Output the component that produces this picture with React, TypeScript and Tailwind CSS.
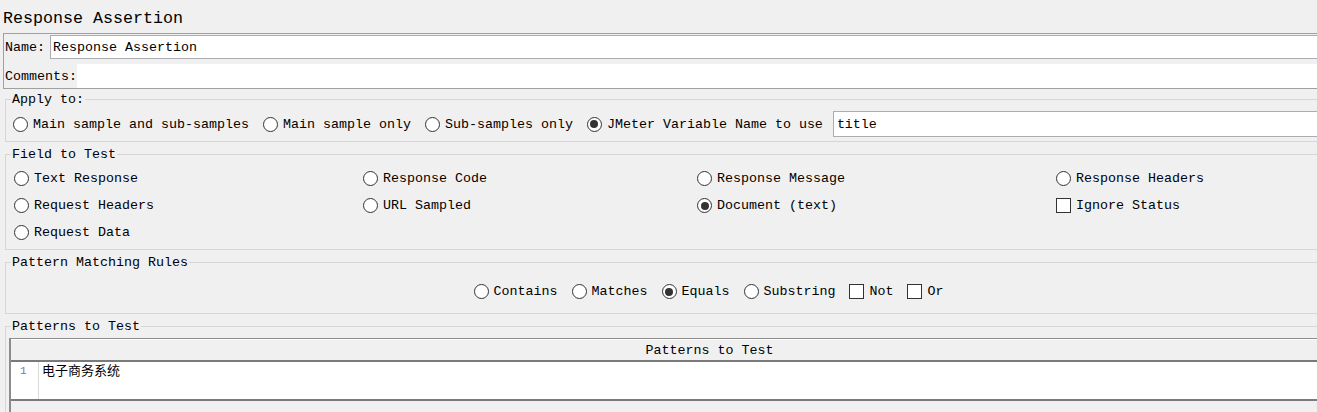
import React from "react";

const mono = "font-['Liberation_Mono','Noto_Sans_CJK_SC',monospace]";

function Radio({ label, checked = false }: { label: string; checked?: boolean }) {
  return (
    <label className="flex items-center gap-[5px] whitespace-nowrap">
      <span className="w-[15px] h-[15px] rounded-full border border-[#333333] bg-white flex items-center justify-center shrink-0">
        {checked && <span className="w-[8px] h-[8px] rounded-full bg-[#333333]" />}
      </span>
      <span className="pt-[1px]">{label}</span>
    </label>
  );
}

function Check({ label }: { label: string }) {
  return (
    <label className="flex items-center gap-[5px] whitespace-nowrap">
      <span className="w-[15px] h-[15px] border border-[#333333] bg-white shrink-0" />
      <span className="pt-[1px]">{label}</span>
    </label>
  );
}

function Group({ title, className = "", children }: { title: string; className?: string; children: React.ReactNode }) {
  return (
    <fieldset className={`border border-[#d6d6d6] mx-[5px] ${className}`}>
      <legend className="ml-[5px] px-[1px] h-[16px] leading-[18px]">{title}</legend>
      {children}
    </fieldset>
  );
}

export default function App() {
  return (
    <div className={`w-full h-[412px] overflow-hidden bg-[#f0f0f0] text-black text-[13.33px] leading-[16px] ${mono}`}>
      <div className="w-[1417px]">
        <div className="h-[33px] pl-[3px] pt-[5px] flex items-center text-[16.67px]">Response Assertion</div>

        <div className="ml-[3px] border border-[#a0a0a0] h-[56px]">
          <div className="flex items-center mt-[1px] h-[24px] pl-[1px]">
            <span className="w-[45px] shrink-0 pt-[2px]">Name:</span>
            <div className="flex-1 h-[24px] bg-white border border-[#abadb3] flex items-center pl-[2px] pt-[2px]">
              Response Assertion
            </div>
          </div>
          <div className="flex items-center mt-[5px] h-[24px] pl-[1px]">
            <span className="w-[72px] shrink-0 pt-[2px]">Comments:</span>
            <div className="flex-1 h-[24px] bg-white" />
          </div>
        </div>

        <Group title="Apply to:" className="mt-[2px]">
          <div className="h-[34px] flex items-center pl-[7px] gap-[14px]">
            <Radio label="Main sample and sub-samples" />
            <Radio label="Main sample only" />
            <Radio label="Sub-samples only" />
            <Radio label="JMeter Variable Name to use" checked />
            <div className="flex-1 h-[26px] bg-white border border-[#abadb3] flex items-center pl-[3px] pt-[1px] -ml-[4px]">
              title
            </div>
          </div>
        </Group>

        <Group title="Field to Test" className="mt-[4px]">
          <div className="grid grid-cols-[349px_334px_359px_1fr] auto-rows-[27px] items-center pl-[8px] pt-[3px] pb-[3px]">
            <Radio label="Text Response" />
            <Radio label="Response Code" />
            <Radio label="Response Message" />
            <Radio label="Response Headers" />
            <Radio label="Request Headers" />
            <Radio label="URL Sampled" />
            <Radio label="Document (text)" checked />
            <Check label="Ignore Status" />
            <Radio label="Request Data" />
          </div>
        </Group>

        <Group title="Pattern Matching Rules" className="mt-[4px]">
          <div className="h-[43px] flex items-center justify-center gap-[14px]">
            <Radio label="Contains" />
            <Radio label="Matches" />
            <Radio label="Equals" checked />
            <Radio label="Substring" />
            <Check label="Not" />
            <Check label="Or" />
          </div>
        </Group>

        <Group title="Patterns to Test" className="mt-[4px]">
          <div className="mx-[3px] mt-[4px] border-l-2 border-t border-[#8c8c8c]">
            <div className="h-[21px] flex items-center justify-center border-t border-white bg-[#f0f0f0] pt-[1px]">
              Patterns to Test
            </div>
            <div className="h-[2px] bg-[#7a7a7a]" />
            <div className="h-[37px] bg-white flex">
              <div className="w-[28px] border-r border-[#d9d9d9] text-[11px] text-[#8a6f96] pl-[9px] pt-[1px]">1</div>
              <div className="pl-[3px] text-[13px] leading-[16px] font-['Noto_Sans_CJK_SC',sans-serif]">电子商务系统</div>
            </div>
            <div className="h-[2px] bg-[#7a7a7a]" />
            <div className="h-[20px]" />
          </div>
        </Group>
      </div>
    </div>
  );
}
